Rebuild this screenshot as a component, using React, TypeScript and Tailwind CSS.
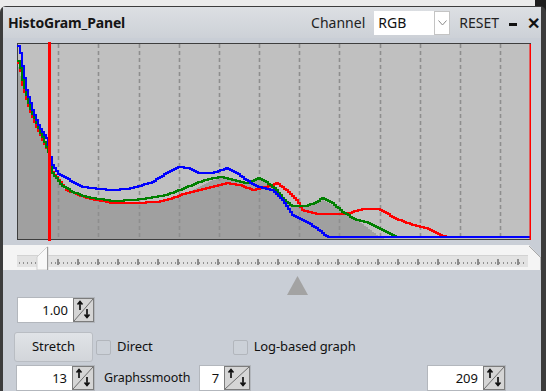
import React from "react";

type Pt = [number, number];

// page-pixel control points read off the screenshot
const BLUE: Pt[] = [[18,45],[20,46],[22,60],[27,90],[33,110],[40,127],[47,138],[49,145],[52,163],[58,173],[70,180],[83,187],[100,189],[113,190],[127,189],[140,186],[153,182],[167,173],[180,167],[190,168],[200,173],[213,173],[228,168],[237,173],[250,182],[260,187],[273,190],[283,200],[293,215],[307,222],[317,228],[328,237],[530,237]];
const GREEN: Pt[] = [[18,60],[20,62],[23,80],[30,107],[37,123],[47,147],[49,152],[53,173],[62,185],[73,192],[87,197],[100,199],[113,201],[133,200],[150,198],[167,195],[180,190],[200,182],[213,178],[223,177],[233,180],[247,183],[260,178],[267,182],[277,190],[283,198],[292,206],[307,206],[317,202],[323,198],[333,203],[343,212],[357,220],[370,223],[383,230],[397,237],[530,237]];
const RED: Pt[] = [[18,62],[20,64],[23,85],[30,110],[37,127],[47,148],[49,152],[53,172],[67,190],[87,198],[113,203],[133,203],[157,202],[173,198],[187,193],[200,190],[213,187],[227,183],[240,185],[253,190],[267,187],[277,183],[287,190],[297,200],[303,210],[317,214],[337,214],[350,213],[363,209],[380,209],[390,215],[400,220],[413,225],[427,228],[440,235],[447,237],[530,237]];
const FILL: Pt[] = [[18,62],[23,85],[30,110],[37,127],[47,148],[53,174],[67,191],[87,199],[113,204],[133,204],[157,203],[173,199],[187,193],[200,186],[213,180],[223,178],[233,181],[247,182],[260,179],[267,183],[277,192],[287,203],[297,207],[313,205],[323,200],[337,207],[350,215],[367,227],[380,237],[386,239],[530,239]];

function interp(pts: Pt[], x: number) {
  if (x <= pts[0][0]) return pts[0][1];
  for (let i = 1; i < pts.length; i++) {
    const [x0, y0] = pts[i - 1];
    const [x1, y1] = pts[i];
    if (x <= x1) return y0 + ((y1 - y0) * (x - x0)) / (x1 - x0);
  }
  return pts[pts.length - 1][1];
}

function stepPath(pts: Pt[]) {
  let d = `M18 ${Math.round(interp(pts, 18))}`;
  for (let x = 18; x < 530; x += 2) {
    d += `V${Math.round(interp(pts, x + 1))}H${x + 2}`;
  }
  return d;
}

function fillPath(pts: Pt[]) {
  const s = stepPath(pts);
  return `M18 239V${Math.round(interp(pts, 18))}` + s.slice(s.indexOf("V")) + "V239Z";
}

const FONT = "font-['Noto_Sans',sans-serif]";

function Histogram() {
  const dashes = Array.from({ length: 12 }, (_, i) => Math.round(18 + 40.17 * (i + 1)) + 0.5);
  return (
    <svg width={516} height={200} viewBox="17 42 516 200" className="block">
      <rect x={17.5} y={43.5} width={513} height={196} fill="#c0c0c0" stroke="#3e3e3e" />
      <path d={fillPath(FILL)} fill="#a0a0a0" />
      {dashes.map((x) => (
        <line key={x} x1={x} y1={44} x2={x} y2={239} stroke="#8e8e8e" strokeWidth={1.6} strokeDasharray="4 3" />
      ))}
      <path d={stepPath(RED)} fill="none" stroke="#ff0000" strokeWidth={2} />
      <path d={stepPath(GREEN)} fill="none" stroke="#008000" strokeWidth={2} />
      <path d={stepPath(BLUE)} fill="none" stroke="#0000ff" strokeWidth={2} />
      <rect x={48} y={42} width={3} height={199} fill="#ff0000" />
      <rect x={529.5} y={44} width={1.5} height={196} fill="#ff0000" />
    </svg>
  );
}

function RangeSlider() {
  const dots: number[] = [];
  for (let x = 19; x < 527; x += 4) dots.push(x);
  const ticks = Array.from({ length: 24 }, (_, i) => 57 + i * 20);
  return (
    <svg width={538} height={25} viewBox="3 245 538 25" className="block">
      <rect x={3} y={245} width={538} height={25} fill="#f4f4f4" />
      <rect x={17} y={255} width={511} height={12} fill="#e2e2e2" />
      <rect x={17} y={255} width={511} height={1} fill="#d2d2d2" />
      {dots.map((x) => (
        <rect key={x} x={x} y={262} width={1} height={2} fill="#8f8f8f" />
      ))}
      {ticks.map((x) => (
        <rect key={x} x={x} y={259} width={2} height={6} fill="#8a8a8a" />
      ))}
      <polygon points="37,257 47,247 48,247 48,270 37,270" fill="#f8f8f8" stroke="#cfcfcf" />
      <line x1={47.5} y1={247} x2={47.5} y2={270} stroke="#9c9c9c" />
      <polygon points="529,245 541,245 541,258" fill="#c9ced6" />
      <line x1={529} y1={246} x2={541} y2={258} stroke="#a8a8a8" />
      <line x1={540.5} y1={258} x2={540.5} y2={270} stroke="#b8b8b8" />
    </svg>
  );
}

function SpinArrows({ w }: { w: number }) {
  return (
    <svg width={w} height={24} viewBox={`0 0 ${w} 24`} className="block shrink-0">
      <rect x={0.5} y={0.5} width={w - 1} height={23} fill="#d5d5d5" stroke="#7c7c7c" />
      <line x1={1} y1={23} x2={w - 1} y2={1} stroke="#6e6e6e" />
      <path d="M7 12V4M4.5 6.5L7 3.5L9.5 6.5" stroke="#111" strokeWidth={1.7} fill="none" />
      <path d={`M${w - 7} 11V19M${w - 9.5} 16.5L${w - 7} 19.5L${w - 4.5} 16.5`} stroke="#111" strokeWidth={1.7} fill="none" />
    </svg>
  );
}

function Spin({ value, boxW, arrowW }: { value: string; boxW: number; arrowW: number }) {
  return (
    <div className="flex h-[26px] items-center border border-[#b3b7bd] bg-white">
      <div style={{ width: boxW }} className="h-full pr-[5px] text-right text-[13px] leading-[24px] text-[#111]">
        {value}
      </div>
      <SpinArrows w={arrowW} />
    </div>
  );
}

function Check({ label }: { label: string }) {
  return (
    <div className="flex items-center gap-[6px]">
      <div className="h-[15px] w-[15px] rounded-[2px] border border-[#b2b6bc] bg-[#ccd1d8]" />
      <span className="text-[13px] tracking-[-0.1px] text-[#111]">{label}</span>
    </div>
  );
}

export default function App() {
  return (
    <div className={`h-[391px] w-[546px] overflow-hidden bg-[linear-gradient(to_right,#ebebeb_98%,#1e1e1e_98%)] ${FONT}`}>
      <div className="mt-[6px] h-[385px] rounded-t-[6px] border-t border-l-[3px] border-r-[5px] border-[#3c3c3c] bg-[#c9ced6]">
        {/* title bar */}
        <div className="flex h-[31px] items-center bg-[linear-gradient(#dcdfe3,#cdd1d7)] pl-[5px]">
          <span className="text-[14px] font-bold tracking-[-0.15px] text-[#151515]">HistoGram_Panel</span>
          <div className="ml-auto flex items-center">
            <span className="text-[14px] text-[#222]">Channel</span>
            <div className="ml-[9px] flex h-[24px] w-[76px] items-center bg-white">
              <span className="flex-1 pl-[4px] text-[14px] text-[#111]">RGB</span>
              <div className="flex h-[24px] w-[16px] items-center justify-center border border-[#c4c4c4]">
                <svg width={9} height={6} viewBox="0 0 9 6">
                  <path d="M0.5 0.5L4.5 5L8.5 0.5" stroke="#8a8a8a" fill="none" />
                </svg>
              </div>
            </div>
            <span className="ml-[9px] text-[14px] text-[#222]">RESET</span>
            <span className="ml-[10px] mt-[4px] h-[3px] w-[8px] bg-[#111]" />
            <span className="ml-[10px] mr-[1px] text-[16px] font-bold leading-none text-[#111]">✕</span>
          </div>
        </div>

        {/* chart */}
        <div className="ml-[14px] mt-[4px]">
          <Histogram />
        </div>

        <div className="mt-[3px]">
          <RangeSlider />
        </div>

        <svg width={21} height={19} viewBox="287 276 21 19" className="ml-[284px] mt-[6px] block">
          <polygon points="297.5,276 308,295 287,295" fill="#a3a3a3" />
        </svg>

        <div className="ml-[14px] mt-[2px] flex">
          <Spin value="1.00" boxW={55} arrowW={21} />
        </div>

        <div className="ml-[11px] mt-[9px] flex h-[30px] items-center">
          <button className="h-[30px] w-[79px] rounded-[3px] border border-[#b9bdc3] bg-[linear-gradient(#e0e3e7,#d2d5da)] text-[13px] text-[#111]">
            Stretch
          </button>
          <div className="ml-[3px]">
            <Check label="Direct" />
          </div>
          <div className="ml-[80px]">
            <Check label="Log-based graph" />
          </div>
        </div>

        <div className="ml-[13px] mt-[3px] flex items-center">
          <Spin value="13" boxW={55} arrowW={22} />
          <span className="ml-[9px] text-[12.5px] tracking-[-0.1px] text-[#111]">Graphssmooth</span>
          <div className="ml-[9px]">
            <Spin value="7" boxW={24} arrowW={26} />
          </div>
          <div className="ml-auto mr-[35px]">
            <Spin value="209" boxW={55} arrowW={22} />
          </div>
        </div>
      </div>
    </div>
  );
}
